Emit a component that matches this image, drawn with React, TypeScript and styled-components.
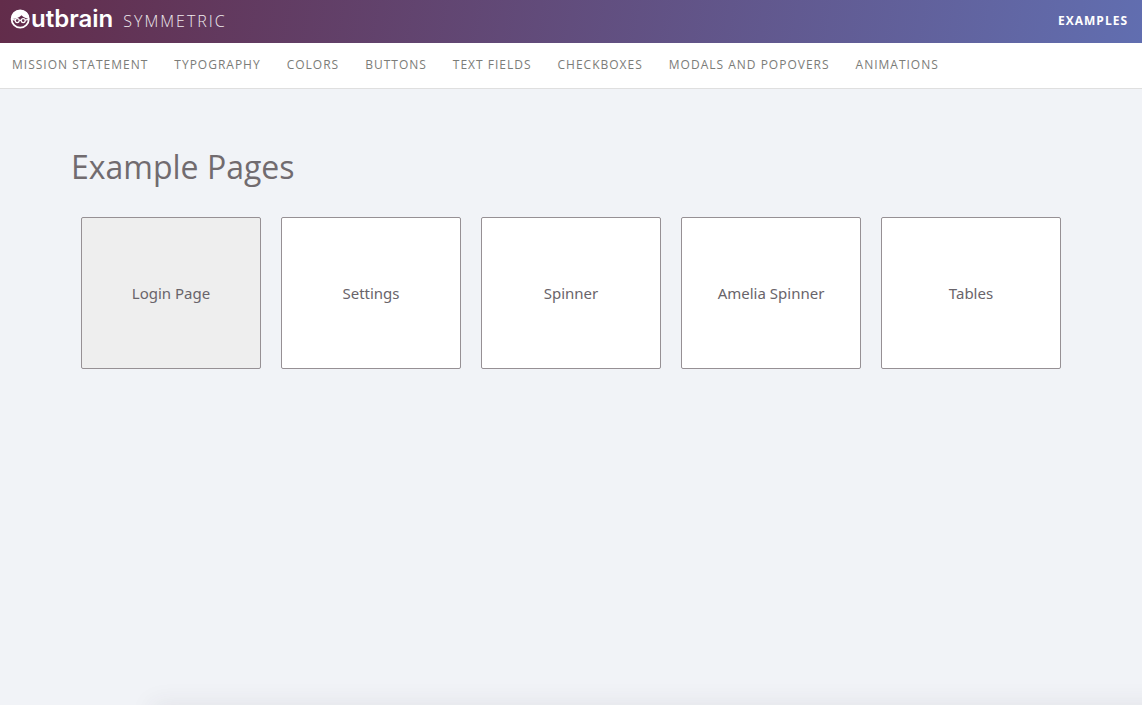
import React from "react";
import styled, { createGlobalStyle } from "styled-components";

const GlobalStyle = createGlobalStyle`
  *, *::before, *::after { box-sizing: border-box; }
  body {
    margin: 0;
    background: #f1f3f7;
    color: #716b6f;
    font-family: "Open Sans", "Noto Sans", sans-serif;
  }
`;

const Page = styled.div`
  display: flex;
  flex-direction: column;
  min-height: 100vh;
  overflow: hidden;
`;

const TopBar = styled.header`
  display: flex;
  align-items: center;
  justify-content: space-between;
  height: 43px;
  padding: 0 14px 2px 10px;
  background: linear-gradient(100deg, #622c4a, #616eb0);
  color: #fff;
`;

const Brand = styled.a`
  display: flex;
  align-items: center;
  color: inherit;
  text-decoration: none;
`;

const Face = styled.svg`
  display: block;
  width: 20px;
  height: 20px;
  margin-top: -4px;
`;

const Wordmark = styled.span`
  margin: -4px 0 0 1px;
  font-family: Inter, sans-serif;
  font-size: 24px;
  font-weight: 600;
  line-height: 32px;
`;

const Product = styled.span`
  margin-left: 10px;
  font-size: 16px;
  font-weight: 300;
  letter-spacing: 2px;
  line-height: 40px;
  opacity: 0.9;
`;

const TopLink = styled.a`
  color: inherit;
  font-size: 12px;
  font-weight: 700;
  letter-spacing: 1px;
  line-height: 40px;
  text-decoration: none;
`;

const NavBar = styled.nav`
  display: flex;
  flex-wrap: wrap;
  gap: 0 26px;
  padding: 0 12px 1px;
  background: #fff;
  border-bottom: 1px solid #dfdfdf;
`;

const NavLink = styled.a`
  color: #7b7c78;
  font-size: 12px;
  letter-spacing: 1px;
  line-height: 44px;
  text-decoration: none;
  white-space: nowrap;
`;

const Main = styled.main`
  flex: 1;
  width: 100%;
  max-width: 1000px;
  margin: 0 auto;
  padding-top: 56px;
`;

const Title = styled.h1`
  margin: 0;
  font-size: 32px;
  font-weight: 400;
  line-height: 44px;
`;

const Cards = styled.div`
  display: flex;
  flex-wrap: wrap;
  gap: 20px;
  padding: 28px 10px;
`;

const Card = styled.a<{ $active?: boolean }>`
  display: flex;
  align-items: center;
  justify-content: center;
  width: 180px;
  height: 152px;
  border: 1px solid #969094;
  border-radius: 2px;
  background: ${(p) => (p.$active ? "#eee" : "#fff")};
  color: #69646a;
  font-family: "Noto Sans", "Open Sans", sans-serif;
  font-size: 15px;
  text-decoration: none;
`;

const BottomShade = styled.div`
  height: 0;
  margin: 0 -20px 0 160px;
  box-shadow: 0 8px 24px 8px rgba(60, 50, 70, 0.1);
`;

const sections = [
  "Mission Statement",
  "Typography",
  "Colors",
  "Buttons",
  "Text Fields",
  "Checkboxes",
  "Modals and Popovers",
  "Animations",
];

const examples = ["Login Page", "Settings", "Spinner", "Amelia Spinner", "Tables"];

function FaceLogo() {
  return (
    <Face viewBox="0 0 20 20" aria-hidden="true">
      <circle cx="10.2" cy="10" r="8.6" fill="none" stroke="#fff" strokeWidth="1.8" />
      <path d="M1.200 10C1.500 4.500 5 1 10.200 1s8.700 3.500 9 9C16.500 9.600 13.500 8.400 11.500 6.200 9.500 8.400 5.500 9.800 1.200 10Z" fill="#fff" />
      <g fill="none" stroke="#fff" strokeWidth="1.200">
        <circle cx="7.200" cy="11.600" r="2" />
        <circle cx="13.200" cy="11.600" r="2" />
        <path d="M9.200 11.400h2M2 10.400l3.200 .8M18.400 10.400l-3.200 .8" />
      </g>
    </Face>
  );
}

export default function App() {
  return (
    <Page>
      <GlobalStyle />
      <TopBar>
        <Brand href="#">
          <FaceLogo />
          <Wordmark>utbrain</Wordmark>
          <Product>SYMMETRIC</Product>
        </Brand>
        <TopLink href="#examples">EXAMPLES</TopLink>
      </TopBar>
      <NavBar>
        {sections.map((name) => (
          <NavLink key={name} href="#">
            {name.toUpperCase()}
          </NavLink>
        ))}
      </NavBar>
      <Main>
        <Title>Example Pages</Title>
        <Cards>
          {examples.map((name, i) => (
            <Card key={name} href="#" $active={i === 0}>
              {name}
            </Card>
          ))}
        </Cards>
      </Main>
      <BottomShade />
    </Page>
  );
}
